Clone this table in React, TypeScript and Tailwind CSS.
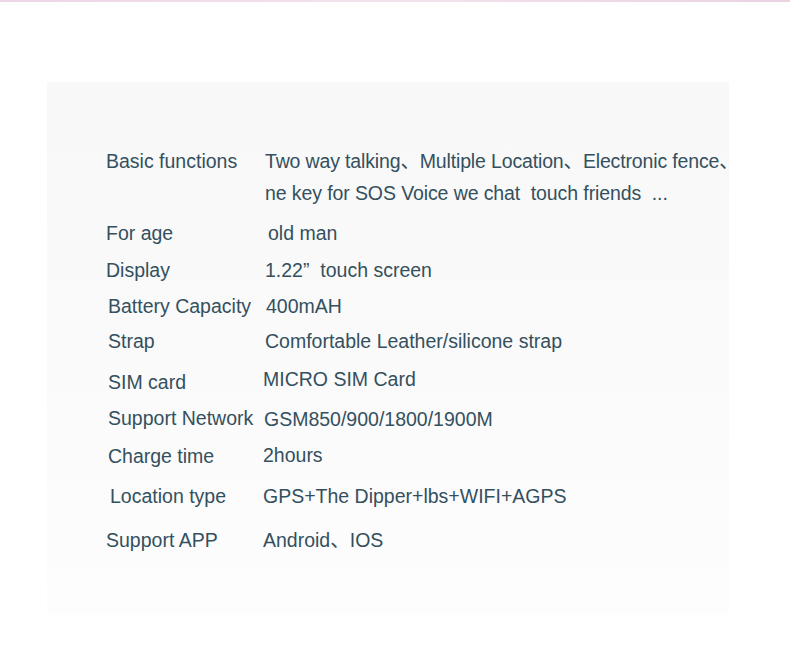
import React from "react";

type Row = {
  label: string;
  value: React.ReactNode;
  mt: string;
  lpl: string;
  lpt: string;
  vpl: string;
  vpt: string;
};

const rows: Row[] = [
  {
    label: "Basic functions",
    value: (
      <>
        <div className="whitespace-pre tracking-[-0.15px]">Two way talking、Multiple Location、Electronic fence、</div>
        <div className="whitespace-pre tracking-[-0.1px]">ne key for SOS Voice we chat  touch friends  ...</div>
      </>
    ),
    mt: "mt-[63px]",
    lpl: "pl-0",
    lpt: "pt-0",
    vpl: "pl-[2px]",
    vpt: "pt-0",
  },
  { label: "For age", value: "old man", mt: "mt-[8px]", lpl: "pl-0", lpt: "pt-0", vpl: "pl-[5px]", vpt: "pt-0" },
  { label: "Display", value: "1.22”  touch screen", mt: "mt-[5px]", lpl: "pl-0", lpt: "pt-0", vpl: "pl-[2px]", vpt: "pt-0" },
  { label: "Battery Capacity", value: "400mAH", mt: "mt-[4px]", lpl: "pl-[2px]", lpt: "pt-0", vpl: "pl-[3px]", vpt: "pt-0" },
  { label: "Strap", value: "Comfortable Leather/silicone strap", mt: "mt-[3px]", lpl: "pl-[2px]", lpt: "pt-0", vpl: "pl-[2px]", vpt: "pt-0" },
  { label: "SIM card", value: "MICRO SIM Card", mt: "mt-[6px]", lpl: "pl-[2px]", lpt: "pt-[3px]", vpl: "pl-0", vpt: "pt-0" },
  { label: "Support Network", value: "GSM850/900/1800/1900M", mt: "mt-[4px]", lpl: "pl-[2px]", lpt: "pt-0", vpl: "pl-[1px]", vpt: "pt-[1px]" },
  { label: "Charge time", value: "2hours", mt: "mt-[4px]", lpl: "pl-[2px]", lpt: "pt-[1px]", vpl: "pl-0", vpt: "pt-0" },
  { label: "Location type", value: "GPS+The Dipper+lbs+WIFI+AGPS", mt: "mt-[8px]", lpl: "pl-[4px]", lpt: "pt-0", vpl: "pl-0", vpt: "pt-0" },
  { label: "Support APP", value: "Android、IOS", mt: "mt-[12px]", lpl: "pl-0", lpt: "pt-0", vpl: "pl-0", vpt: "pt-0" },
];

export default function App() {
  return (
    <div
      className="w-[790px] h-[650px] bg-white overflow-hidden"
      style={{ fontFamily: '"Liberation Sans", Arial, "Noto Sans CJK SC", sans-serif' }}
    >
      <div className="h-[2px] bg-gradient-to-r from-[#efd6e6] via-[#f3e2ec] to-[#ead3e2]" />
      <div className="mt-[80px] ml-[47px] w-[682px] h-[533px] bg-gradient-to-b from-[#f8f8f8] via-[#fafafa] to-[#fdfdfd]">
        <div className="pl-[59px] flex flex-col text-[19.5px] leading-[32px] text-[#34505e]">
          {rows.map((r) => (
            <div key={r.label} className={`flex items-start ${r.mt}`}>
              <div className={`w-[157px] shrink-0 whitespace-nowrap ${r.lpl} ${r.lpt}`}>{r.label}</div>
              <div className={`whitespace-pre ${r.vpl} ${r.vpt}`}>{r.value}</div>
            </div>
          ))}
        </div>
      </div>
    </div>
  );
}
